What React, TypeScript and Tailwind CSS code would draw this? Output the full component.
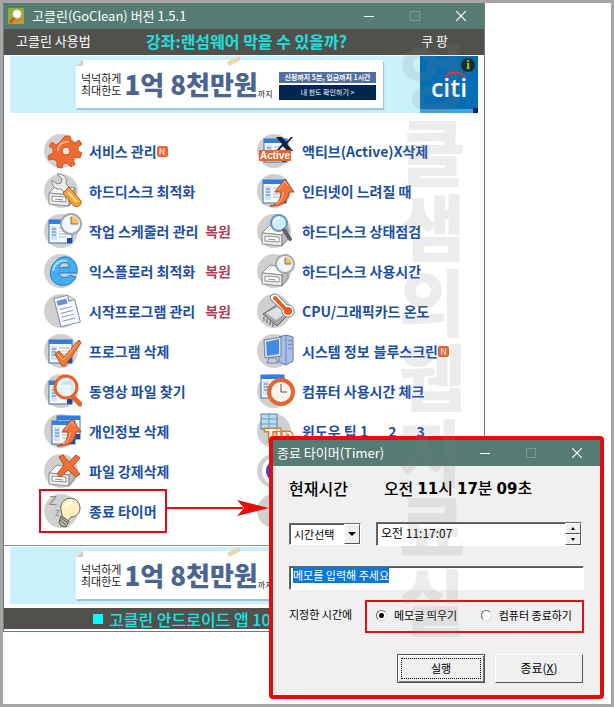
import { useEffect, useRef, type ReactNode } from "react";

type Item = {
  label: string;
  icon: ReactNode;
  isNew?: boolean;
  extras?: string[];
  restore?: boolean;
};

// ─── Icon parts ───

function Base({ children }: { children?: ReactNode }) {
  return (
    <svg viewBox="0 0 38 38" className="h-[38px] w-[38px] shrink-0" aria-hidden="true">
      <circle cx="17" cy="19" r="17" fill="#d0d0d0" />
      {children}
    </svg>
  );
}

function Sheet({ x = 5, y = 8 }: { x?: number; y?: number }) {
  return (
    <g transform={`translate(${x} ${y})`}>
      <rect width="23" height="23" fill="#f7fbff" stroke="#3d6fb5" />
      <rect width="23" height="4" fill="#2f7fe0" />
      <rect x="2" y="6" width="6" height="14" fill="#cfe2f7" />
      <path d="M3 9h4M3 12h4M3 15h4" stroke="#4c86c9" strokeWidth="1" />
      <path d="M10 8h11M10 14h11M10 17h7" stroke="#9ab2cd" strokeWidth="1" />
      <path d="M10 11h11" stroke="#f0cf4a" strokeWidth="1" />
      <rect x="18" y="18" width="5" height="5" fill="#1c4f9c" />
    </g>
  );
}

function Disk() {
  return (
    <g stroke="#8b8b8b" strokeWidth="1" strokeLinejoin="round">
      <path d="M5 21l8-8 18 3-6 7z" fill="#fafafa" />
      <path d="M5 21l20 2v11l-20-2z" fill="#efefef" />
      <path d="M25 23l6-7v10l-6 8z" fill="#bdbdbd" />
      <path d="M8 24l14 1v5l-14-1z" fill="#fff" />
      <path d="M11 27l8 1" />
    </g>
  );
}

function Clock({ cx = 28, cy = 11, r = 9 }: { cx?: number; cy?: number; r?: number }) {
  return (
    <g>
      <circle cx={cx} cy={cy} r={r} fill="#f3f6f8" stroke="#a3a7ab" strokeWidth="2" />
      <path d={`M${cx} ${cy}V${cy - r + 2}A${r - 2} ${r - 2} 0 0 1 ${cx + r - 2} ${cy}z`} fill="#f2c06a" />
      <path d={`M${cx} ${cy - r + 3}V${cy}H${cx + r - 3}`} fill="none" stroke="#7a6a55" strokeWidth="1" />
    </g>
  );
}

function UpArrow() {
  return (
    <g strokeLinejoin="round">
      <path
        d="M13 34c7-1 11-6 11-14h-6L28 7l9 13h-5c0 9-8 15-19 14z"
        fill="#f0733a"
        stroke="#b5421a"
        strokeWidth="1"
      />
      <path d="M21 18l7-9 3 5M26 20c0 6-3 10-7 12" fill="none" stroke="#ffb48a" strokeWidth="1" />
    </g>
  );
}

const gear = (
  <Base>
    <g fill="#ee6b30" stroke="#c9562a" strokeWidth="1" strokeLinejoin="round">
      <path d="M21 4l5 0 1 5 4 2 4-3 3 4-4 3 0 4 4 2-2 5-5-1-2 3 2 4-4 3-4-4-4 1-1 4-5-1 0-5-3-3-5 1-1-4 5-3 0-4-4-3 3-4 4 3 4-3z" />
      <circle cx="22" cy="19" r="4" fill="#f6e7df" />
    </g>
    <path d="M14 19a9 9 0 0 1 11-9" fill="none" stroke="#ffad7d" strokeWidth="2" />
  </Base>
);

const wrench = (
  <Base>
    <Disk />
    <path
      d="M13 2l5 5-1 4-4 1-5-4c-1 6 4 10 9 9l5 5 5-5-5-5c2-6-3-11-9-10z"
      fill="#e9ecef"
      stroke="#7d8286"
      strokeLinejoin="round"
    />
    <path d="M19 21l6-6 12 14c1 4-3 7-7 5z" fill="#f5a432" stroke="#a96413" strokeLinejoin="round" />
    <path d="M24 20l9 10" stroke="#ffd892" strokeWidth="2" />
  </Base>
);

const scheduler = (
  <Base>
    <Sheet />
    <Clock cx={27} cy={12} r={10} />
  </Base>
);

const explorer = (
  <Base>
    <path
      d="M33 21H15c1 5 7 6 11 2l6 2c-4 8-14 11-21 6C3 25 6 11 16 6c9-4 18 3 17 15zM15 16l10-1c0-6-9-6-10 1z"
      fill="#45aef0"
      stroke="#1e7cc7"
    />
    <path d="M9 19c1-7 7-12 14-10" fill="none" stroke="#a9e0ff" strokeWidth="2" />
  </Base>
);

const startup = (
  <Base>
    <g transform="rotate(-14 22 18)">
      <path d="M13 4h14l6 6v23H13z" fill="#fbfcff" stroke="#8089a8" />
      <path d="M27 4v6h6" fill="#dbe1f0" stroke="#8089a8" />
      <rect x="15" y="7" width="10" height="5" fill="#6d8fd1" />
      <path d="M16 16h13M16 20h13M16 24h13M16 28h13" stroke="#8b93b3" strokeWidth="1" />
    </g>
  </Base>
);

const programs = (
  <Base>
    <Sheet />
    <path d="M11 22l4-3 5 6L35 8l2 3-16 23h-3z" fill="#f27a33" stroke="#b04c18" strokeLinejoin="round" />
    <path d="M14 22l5 6 14-16" fill="none" stroke="#ffc08f" />
  </Base>
);

const videoSearch = (
  <Base>
    <Sheet y={9} />
    <circle cx="22" cy="15" r="11" fill="#e8f6ff" fillOpacity=".85" stroke="#e9602a" strokeWidth="3" />
    <path d="M15 13c1-4 5-6 9-5" fill="none" stroke="#fff" strokeWidth="2" />
    <path d="M29 25l7 7" stroke="#e9602a" strokeWidth="5" strokeLinecap="round" />
  </Base>
);

const privacy = (
  <Base>
    <Sheet x={13} y={4} />
    <Sheet x={8} y={9} />
    <UpArrow />
  </Base>
);

const forceDelete = (
  <Base>
    <Disk />
    <path
      d="M15 5l4-2 6 7 7-7 4 3-7 8 7 8-4 3-8-7-7 7-4-3 7-9z"
      fill="#f0703a"
      stroke="#b74a1e"
      strokeLinejoin="round"
    />
  </Base>
);

const bulb = (
  <Base>
    <text x="5" y="13" fontSize="13" fill="#8a8a8a" fontFamily="Liberation Sans" fontWeight="400">
      Z
    </text>
    <text x="11" y="24" fontSize="10" fill="#8a8a8a" fontFamily="Liberation Sans" fontWeight="400">
      z
    </text>
    <path
      d="M18 24c0-4-2-6-1-11C20 5 30 4 34 10c5 8 0 15-7 15l-3 4z"
      fill="#fff1bd"
      stroke="#6b6455"
    />
    <path d="M17 24l8 5-3 6-5-1-2-4z" fill="#b9b4a6" stroke="#5b574e" />
    <path d="M22 15c1-4 4-5 7-4" fill="none" stroke="#fff" strokeWidth="3" />
    <path d="M17 26l7 5M16 28l6 5" stroke="#6b665b" />
  </Base>
);

const activeX = (
  <Base>
    <Sheet x={7} y={7} />
    <path d="M19 5h6l4 5 5-5h2l-6 7 6 7h-6l-4-5-5 5h-2l6-7z" fill="#15243c" />
    <rect x="2" y="18" width="32" height="11" fill="#e8622a" />
    <text x="18" y="27" textAnchor="middle" fontSize="10" fontWeight="700" fill="#fff" fontFamily="Liberation Sans">
      Active
    </text>
  </Base>
);

const slowNet = (
  <Base>
    <Sheet x={6} y={8} />
    <UpArrow />
  </Base>
);

const diskCheck = (
  <Base>
    <Disk />
    <circle cx="22" cy="11" r="8" fill="#cfeaff" stroke="#5f93c4" strokeWidth="2" />
    <path d="M17 10c1-3 4-4 6-4" fill="none" stroke="#fff" strokeWidth="2" />
    <path d="M27 18l6 9" stroke="#5c6470" strokeWidth="4" strokeLinecap="round" />
  </Base>
);

const diskTime = (
  <Base>
    <Disk />
    <Clock cy={12} />
  </Base>
);

const temperature = (
  <Base>
    <path d="M6 22l14-9 12 9-12 12z" fill="#a5a7aa" stroke="#5c5e61" />
    <path d="M9 21l11-6 9 6-10 7z" fill="#dedfe1" />
    <path d="M7 25v4M10 27v4M13 29v4M16 31v4" stroke="#555" />
    <path
      d="M15 3c3-2 5-1 7 1l8 9c5-1 8 4 7 8-2 6-11 5-12-1v-2L14 8c-1-2-1-4 1-5z"
      fill="#fff"
      stroke="#777"
    />
    <path d="M18 6l12 13" stroke="#e85a20" strokeWidth="4" strokeLinecap="round" />
    <circle cx="31" cy="19" r="4" fill="#e85a20" />
  </Base>
);

const systemInfo = (
  <Base>
    <path d="M22 5l7-2 7 2v24l-7 4-7-3z" fill="#a9c0e6" stroke="#5f78a8" />
    <path d="M29 3v30M31 9l4-1M31 13l4-1M31 17l4-1" stroke="#6d86b8" />
    <path d="M7 8l17-3v19L8 26z" fill="#dce7f5" stroke="#6f8099" />
    <path d="M9 10l13-3v15l-12 2z" fill="#3f8be6" />
    <path d="M12 26h7l2 5H10z" fill="#c4cedc" stroke="#72819a" />
  </Base>
);

const usage = (
  <Base>
    <Sheet x={4} y={3} />
    <circle cx="24" cy="20" r="12" fill="#f5f3ef" stroke="#e3692f" strokeWidth="4" />
    <path d="M24 12v8h6" fill="none" stroke="#555" />
  </Base>
);

const tip = (
  <Base>
    <rect x="4" y="2" width="16" height="15" fill="#b8dcf2" stroke="#4d7fa5" />
    <path d="M4 7h16M4 12h16M12 2v15" stroke="#6b9dbf" />
    <text
      x="8"
      y="30"
      fontSize="19"
      fontWeight="700"
      fill="#fff3dd"
      stroke="#c9823a"
      strokeWidth="3"
      paintOrder="stroke"
      fontFamily="Liberation Sans"
    >
      Tip
    </text>
  </Base>
);

const globe = (
  <Base>
    <circle cx="19" cy="19" r="14" fill="#fff" />
    <circle cx="20" cy="19" r="11" fill="#4a43c9" />
  </Base>
);

const leftItems: Item[] = [
  { label: "서비스 관리", icon: gear, isNew: true },
  { label: "하드디스크 최적화", icon: wrench },
  { label: "작업 스케줄러 관리", icon: scheduler, restore: true },
  { label: "익스플로러 최적화", icon: explorer, restore: true },
  { label: "시작프로그램 관리", icon: startup, restore: true },
  { label: "프로그램 삭제", icon: programs },
  { label: "동영상 파일 찾기", icon: videoSearch },
  { label: "개인정보 삭제", icon: privacy },
  { label: "파일 강제삭제", icon: forceDelete },
  { label: "종료 타이머", icon: bulb },
];

const rightItems: Item[] = [
  { label: "액티브(Active)X삭제", icon: activeX },
  { label: "인터넷이 느려질 때", icon: slowNet },
  { label: "하드디스크 상태점검", icon: diskCheck },
  { label: "하드디스크 사용시간", icon: diskTime },
  { label: "CPU/그래픽카드 온도", icon: temperature },
  { label: "시스템 정보", icon: systemInfo, extras: ["블루스크린"], isNew: true },
  { label: "컴퓨터 사용시간 체크", icon: usage },
  { label: "윈도우 팁 1", icon: tip, extras: ["2", "3"] },
  { label: "", icon: globe },
  { label: "", icon: <Base /> },
];

// ─── Shared pieces ───

function Caption({ title, logo }: { title: string; logo?: ReactNode }) {
  return (
    <header className="flex h-[26px] items-center bg-[#567b72] pl-1 text-white">
      {logo}
      <span className="flex-1 text-[13px] leading-6">{title}</span>
      <div className="flex">
        <button aria-label="최소화" className="grid h-[26px] w-[46px] place-items-center">
          <span className="h-px w-[10px] bg-white" />
        </button>
        <button aria-label="최대화" disabled className="grid h-[26px] w-[46px] place-items-center">
          <span className="h-[10px] w-[10px] border border-[#7d9b93]" />
        </button>
        <button aria-label="닫기" className="grid h-[26px] w-[46px] place-items-center">
          <svg viewBox="0 0 10 10" className="h-[10px] w-[10px]" stroke="#fff" strokeWidth="1.2">
            <path d="M0 0l10 10M10 0L0 10" />
          </svg>
        </button>
      </div>
    </header>
  );
}

function Logo() {
  return (
    <svg viewBox="0 0 16 16" className="mr-2 h-4 w-4" aria-hidden="true">
      <rect width="16" height="16" rx="1" fill="#8fae3c" />
      <path d="M0 16L16 4v12z" fill="#b99a38" />
      <path d="M7 9l-4 5" stroke="#d8501e" strokeWidth="3" strokeLinecap="round" />
      <circle cx="9" cy="6" r="4" fill="#fff" stroke="#f4efdb" />
    </svg>
  );
}

function Banner() {
  return (
    <div className="mx-[6px] flex h-[57px] justify-between bg-[#caf1fa]">
      <div className="relative ml-[66px] mt-1 flex h-12 w-[307px] items-center bg-white pl-[5px] shadow-[1px_2px_1px_#9fc6d4]">
        <svg viewBox="0 0 16 10" className="absolute -top-[4px] left-[150px] h-[10px] w-4" aria-hidden="true">
          <path d="M1 6l12-6 2 4-12 6z" fill="#ecd5ab" />
        </svg>
        <svg viewBox="0 0 7 6" className="absolute left-0 top-0 h-[6px] w-[7px]" aria-hidden="true">
          <path d="M0 0h7v6H0z" fill="#caf1fa" />
          <path d="M7 0v6H0z" fill="#dccfc0" />
        </svg>
        <p className="whitespace-nowrap text-[11px] leading-3 text-[#222]">
          넉넉하게
          <br />
          최대한도
        </p>
        <strong className="ml-[3px] whitespace-nowrap text-[26px] font-black leading-8 text-[#4a658f]">
          1억 8천만원
        </strong>
        <span className="self-end whitespace-nowrap pb-2 text-[8px] text-[#222]">까지</span>
        <div className="absolute right-[7px] top-3 flex w-[97px] flex-col gap-0.5 whitespace-nowrap text-center text-[7px] text-white">
          <span className="bg-[#536f9f] font-bold leading-[11px]">신청까지 5분, 입금까지 1시간</span>
          <a href="#limit" className="bg-[#012650] leading-[15px]">
            내 한도 확인하기 &gt;
          </a>
        </div>
      </div>
      <div className="relative flex w-[58px] items-center justify-center border-b-4 border-[#3fa5df] bg-[#056db4]">
        <span className="absolute -bottom-1 right-0 h-[5px] w-[5px] bg-[#012650]" />
        <svg viewBox="0 0 24 8" className="absolute left-[23px] top-[14px] h-2 w-6" aria-hidden="true">
          <path d="M2 7c5-6 15-6 20 0" fill="none" stroke="#e0303c" strokeWidth="2" />
        </svg>
        <span className="pt-2 font-['Open_Sans'] text-[25px] font-semibold leading-6 text-white">citi</span>
        <span className="absolute right-[3px] top-[2px] grid h-[14px] w-[14px] place-items-center rounded-full bg-[#1c2b2b] font-['Liberation_Serif'] text-[13px] font-bold leading-3 text-[#8fe030]">
          i
        </span>
      </div>
    </div>
  );
}

function ItemRow({ item }: { item: Item }) {
  return (
    <li className="flex h-10 items-center whitespace-nowrap text-[14px] font-bold text-[#1b4fa3]">
      {item.icon}
      <a href="#run" className="ml-[7px]">
        {item.label}
      </a>
      {item.extras?.map((extra) => (
        <a key={extra} href="#run" className={item.isNew ? "ml-1" : "ml-5"}>
          {extra}
        </a>
      ))}
      {item.isNew && (
        <span className="grid h-[11px] w-[11px] place-items-center rounded-xs bg-[#ea642c] text-[9px] font-normal leading-none text-white">
          N
        </span>
      )}
      {item.restore && (
        <a href="#restore" className="ml-auto text-[#b23a52]">
          복원
        </a>
      )}
    </li>
  );
}

function MainWindow() {
  return (
    <section className="w-full max-w-[482px] border border-[#6d7d7a] border-t-0 bg-white">
      <Caption title="고클린(GoClean) 버전 1.5.1" logo={<Logo />} />
      <nav className="flex h-[26px] items-center bg-[#50504d] text-[13px] leading-6 text-white">
        <a href="#help" className="w-[142px] pb-0.5 pl-3">
          고클린 사용법
        </a>
        <a href="#lecture" className="flex-1 pb-0.5 text-[16px] font-bold text-[#1fe0dc]">
          강좌:랜섬웨어 막을 수 있을까?
        </a>
        <a href="#shop" className="pb-0.5 pr-9">
          쿠 팡
        </a>
      </nav>
      <div className="pt-px">
        <Banner />
      </div>

      <div className="flex pb-[14px] pl-10 pt-[18px]">
        <ul className="w-[187px]">
          {leftItems.map((item, i) => (
            <ItemRow key={i} item={item} />
          ))}
        </ul>
        <ul className="ml-[26px]">
          {rightItems.map((item, i) => (
            <ItemRow key={i} item={item} />
          ))}
        </ul>
      </div>

      <div className="border-t border-[#8a9090] pb-1 pt-px">
        <Banner />
      </div>
      <footer className="mb-0.5 flex h-[21px] items-center gap-[6px] bg-[#50504d] pl-[89px] text-[16px] font-medium text-[#12e8e6]">
        <span className="h-[10px] w-[10px] bg-[#00ffff]" />
        고클린 안드로이드 앱 100
      </footer>
    </section>
  );
}

// ─── Timer dialog ───

const sunken = "border border-[#6a6a6a] border-b-white border-r-white bg-white shadow-[inset_1px_1px_0_#555]";
const raised = "border border-white border-b-[#555] border-r-[#555] bg-[#f0f0f0]";

function TimerDialog() {
  const memo = useRef<HTMLInputElement>(null);

  useEffect(() => {
    memo.current?.focus();
    memo.current?.select();
  }, []);

  return (
    <section className="w-[335px] rounded-sm border-4 border-[#e60c0c] bg-[#f0f0f0] text-[11px] text-black">
      <Caption title="종료 타이머(Timer)" />
      <div className="px-4 pb-3 pt-2">
        <div className="flex h-7 items-center gap-9 text-[16px] font-medium leading-6">
          <span>현재시간</span>
          <time className="flex items-center gap-1">
            <span>오전</span>
            {[
              ["11", "시"],
              ["17", "분"],
              ["09", "초"],
            ].map(([n, unit]) => (
              <span key={unit}>
                <b className="font-['DejaVu_Sans'] text-[15px]">{n}</b>
                {unit}
              </span>
            ))}
          </time>
        </div>

        <div className="mt-5 flex items-center gap-[15px]">
          <div className="relative w-[72px]">
            <select aria-label="시간선택" className={`${sunken} h-[22px] w-full appearance-none pl-1 text-[11px]`}>
              <option>시간선택</option>
            </select>
            <span
              className={`${raised} pointer-events-none absolute bottom-px right-px grid h-5 w-4 place-items-center`}
            >
              <svg viewBox="0 0 8 4" className="h-1 w-2" aria-hidden="true">
                <path d="M0 0h8L4 4z" />
              </svg>
            </span>
          </div>
          <div className={`${sunken} flex h-6 w-[206px] items-center pl-1`}>
            <input
              aria-label="시간"
              defaultValue="오전 11:17:07"
              className="w-0 flex-1 pb-0.5 text-[12px] outline-none"
            />
            <div className="flex h-full flex-col">
              {["M0 3h4L2 0z", "M0 0h4L2 3z"].map((d, i) => (
                <button
                  key={d}
                  aria-label={i === 0 ? "위로" : "아래로"}
                  className={`${raised} grid w-4 flex-1 place-items-center`}
                >
                  <svg viewBox="0 0 4 3" className="h-[3px] w-1">
                    <path d={d} />
                  </svg>
                </button>
              ))}
            </div>
          </div>
        </div>

        <div className={`${sunken} mt-5 h-6 px-[3px]`}>
          <input
            ref={memo}
            aria-label="메모"
            defaultValue="메모를 입력해 주세요"
            className="block w-full text-[11px] leading-4 outline-none selection:bg-[#0a78d7] selection:text-white"
          />
        </div>

        <fieldset className="mt-[10px] flex items-center justify-between">
          <span className="pb-1">지정한 시간에</span>
          <div className="flex h-[33px] w-[219px] items-center justify-between border-2 border-[#e01018] pb-0.5 pl-[9px] pr-[10px]">
            {["메모글 띄우기", "컴퓨터 종료하기"].map((text, i) => (
              <label key={text} className="flex items-center gap-[7px]">
                <input
                  type="radio"
                  name="action"
                  defaultChecked={i === 0}
                  className="h-[11px] w-[11px] appearance-none rounded-full border border-[#666] border-b-[#ddd] border-r-[#ddd] bg-white bg-center checked:bg-[radial-gradient(circle,#000_2px,#fff_3px)]"
                />
                {text}
              </label>
            ))}
          </div>
        </fieldset>

        <div className="mt-[21px] flex justify-end gap-[10px] pr-px">
          <button className="h-[29px] w-[88px] border border-[#555] p-[3px] shadow-[inset_1px_1px_0_#fff,inset_-1px_-1px_0_#777]">
            <span className="grid h-full place-items-center border border-dotted border-black">실행</span>
          </button>
          <button className={`${raised} h-[29px] w-[88px] pb-0.5 text-[12px]`}>
            종료(<u>X</u>)
          </button>
        </div>
      </div>
    </section>
  );
}

export default function App() {
  return (
    <main className="relative min-h-screen overflow-hidden border-[3px] border-[#a6a6a6] bg-white font-['Noto_Sans_CJK_KR',sans-serif]">
      <MainWindow />

      {/* highlight on the timer entry and the arrow to its dialog */}
      <div className="absolute left-9 top-[486px] h-[44px] w-[128px] border-2 border-[#d01018]" />
      <svg viewBox="0 0 102 16" className="absolute left-[164px] top-[497px] h-4 w-[102px]" aria-hidden="true">
        <path d="M0 8h76" stroke="#e60c0c" strokeWidth="2" />
        <path d="M70 0l32 8-32 8 7-8z" fill="#e60c0c" />
      </svg>

      <div className="absolute left-[266px] top-[433px]">
        <TimerDialog />
      </div>

      <div
        className="pointer-events-none absolute left-[396px] top-[33px] flex flex-col text-[72px] font-black leading-[75px] text-[#828282]/15"
        aria-hidden="true"
      >
        {[..."엉클샘의웹자료실"].map((ch) => (
          <span key={ch}>{ch}</span>
        ))}
      </div>
    </main>
  );
}
